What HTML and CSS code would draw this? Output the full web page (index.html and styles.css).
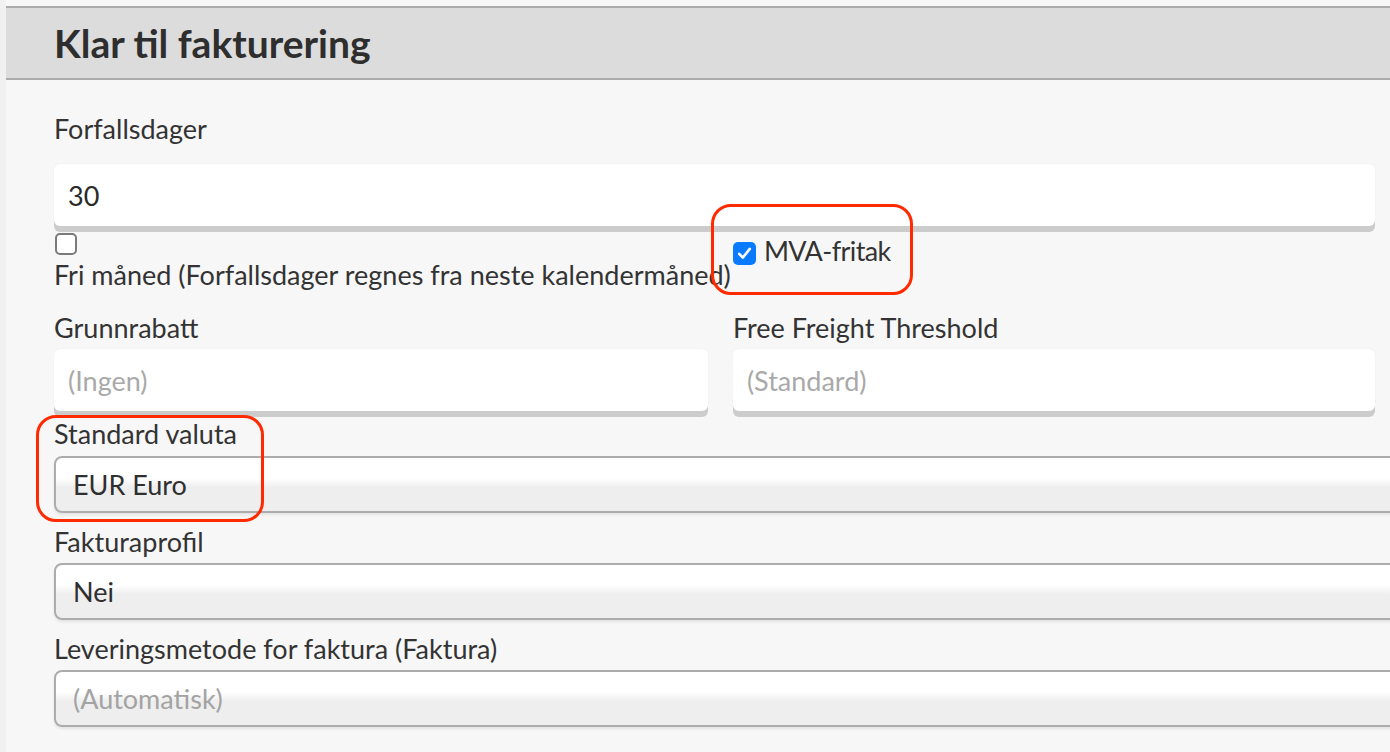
FILE: index.html
```html
<!DOCTYPE html>
<html lang="no">
<head>
<meta charset="utf-8">
<title>Klar til fakturering</title>
<link rel="stylesheet" href="styles.css">
</head>
<body>
<div class="page">
  <div class="strip"></div>
  <main class="main">
    <section class="panel">
      <header class="panel-head">
        <h1 class="panel-title">Klar til fakturering</h1>
      </header>
      <div class="panel-body">
        <div class="field field-first">
          <label class="label">Forfallsdager</label>
          <div class="text-input">30</div>
        </div>

        <div class="two-col check-row">
          <div class="check-left">
            <span class="cb cb-off"></span>
            <label class="label nowrap">Fri måned (Forfallsdager regnes fra neste kalendermåned)</label>
          </div>
          <div class="check-right">
            <span class="cb cb-on">
              <svg viewBox="0 0 23 23" width="23" height="23" aria-hidden="true">
                <rect x="0" y="0" width="23" height="23" rx="5" fill="#0a7bff"/>
                <path d="M6.2 11.8 L9.8 15.6 L16.8 6.9" fill="none" stroke="#fff" stroke-width="2.6" stroke-linecap="round" stroke-linejoin="round"/>
              </svg>
            </span>
            <label class="label mva-label">MVA-fritak</label>
          </div>
        </div>

        <div class="two-col field-row">
          <div class="field">
            <label class="label">Grunnrabatt</label>
            <div class="text-input placeholder">(Ingen)</div>
          </div>
          <div class="field">
            <label class="label">Free Freight Threshold</label>
            <div class="text-input placeholder">(Standard)</div>
          </div>
        </div>

        <div class="select-field">
          <label class="label">Standard valuta</label>
          <div class="select">EUR Euro</div>
        </div>
        <div class="select-field">
          <label class="label">Fakturaprofil</label>
          <div class="select">Nei</div>
        </div>
        <div class="select-field">
          <label class="label">Leveringsmetode for faktura (Faktura)</label>
          <div class="select placeholder">(Automatisk)</div>
        </div>
      </div>
    </section>
  </main>
</div>
<div class="annot annot-mva"></div>
<div class="annot annot-valuta"></div>
</body>
</html>
```
FILE: styles.css
```css
html, body {
  margin: 0;
  padding: 0;
  height: 100%;
  overflow: hidden;
  background: #f7f7f7;
}

body {
  font-family: Lato, "Open Sans", "Liberation Sans", sans-serif;
  color: #333;
  position: relative;
}

.page {
  display: flex;
  min-height: 100%;
}

.strip {
  width: 6px;
  flex: none;
  background: #f1f1f1;
}

.main {
  flex: 1;
  min-width: 0;
  padding-top: 6px;
  background: #f7f7f7;
}

.panel-head {
  background: #dcdcdc;
  border-top: 2px solid #ababab;
  border-bottom: 2px solid #ababab;
  height: 70px;
  display: flex;
  align-items: center;
  padding-left: 48px;
}

.panel-title {
  margin: 0;
  font-size: 39px;
  font-weight: 700;
  line-height: 70px;
  color: #2e2e2e;
}

.panel-body {
  padding: 33px 15px 0 48px;
}

.label {
  display: block;
  font-size: 27px;
  line-height: 1.2;
  color: #333;
}

.nowrap {
  white-space: nowrap;
}

.text-input {
  height: 62px;
  box-sizing: border-box;
  background: #fff;
  border-radius: 6px;
  box-shadow: 0 6px 0 #cccccc, 0 0 2px rgba(0, 0, 0, 0.06);
  font-size: 27px;
  line-height: 63px;
  padding-left: 14px;
  color: #2a2a2a;
  margin-bottom: 6px;
}

.field .label {
  margin-bottom: 5px;
}

.field-first .label {
  margin-bottom: 19px;
}

.placeholder {
  color: #a9a9a9;
}

.two-col {
  display: grid;
  grid-template-columns: 49.5% 1fr;
  column-gap: 25px;
}

.check-left {
  padding-top: 1px;
}

.cb {
  display: block;
  box-sizing: border-box;
}

.cb-off {
  width: 22px;
  height: 22px;
  border: 2px solid #7a7a7a;
  border-radius: 5px;
  background: #fff;
  margin-left: 1px;
  margin-bottom: 4px;
}

.check-right {
  display: flex;
  align-items: flex-start;
  gap: 8px;
  padding-top: 3px;
}

.cb-on {
  width: 23px;
  height: 23px;
  margin-top: 7px;
}

.cb-on svg {
  display: block;
}

.mva-label {
  letter-spacing: -0.6px;
}

.field-row {
  margin-top: 20px;
}

.select-field {
  margin-right: -40px;
}

.field-row + .select-field {
  margin-top: 1px;
}

.select {
  height: 57px;
  box-sizing: border-box;
  margin-top: 5px;
  margin-bottom: 13px;
  border: 2px solid #acacac;
  border-radius: 8px;
  background: linear-gradient(#ffffff 0%, #ffffff 38%, #eeeeee 55%, #eeeeee 100%);
  box-shadow: 0 2px 3px rgba(0, 0, 0, 0.08);
  font-size: 27px;
  line-height: 53px;
  padding-left: 17px;
  color: #2f2f2f;
}

.select.placeholder {
  color: #a3a3a3;
}

.annot {
  position: absolute;
  box-sizing: border-box;
  border: 3.5px solid #ff2a00;
  border-radius: 20px;
  pointer-events: none;
}

.annot-mva {
  left: 711px;
  top: 204px;
  width: 202px;
  height: 91px;
}

.annot-valuta {
  left: 36px;
  top: 415px;
  width: 228px;
  height: 107px;
}
```
